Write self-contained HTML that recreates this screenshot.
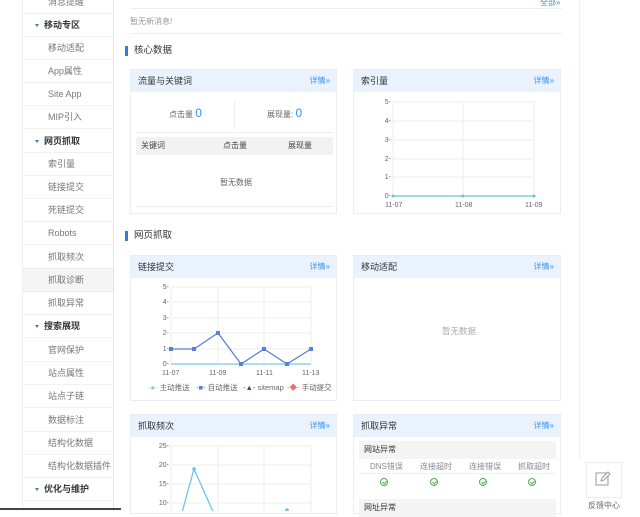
<!DOCTYPE html>
<html><head><meta charset="utf-8"><style>
*{margin:0;padding:0;box-sizing:border-box}
body{width:640px;height:511px;overflow:hidden;background:#fff;position:relative;font-family:"Liberation Sans","Noto Sans CJK SC",sans-serif;font-size:9px;color:#666}
.a{position:absolute}
.side{left:22px;top:0;width:92px;height:511px;border-left:1px solid #eee;border-right:1px solid #e6e6e6}
.it{position:absolute;left:0;width:90px;height:23px;line-height:23px;border-bottom:1px solid #f0f0f0;padding-left:25px;color:#777;font-size:9px}
.gr{padding-left:12px;color:#333;font-weight:bold}
.gr:before{content:"";display:inline-block;width:0;height:0;border-left:2.5px solid transparent;border-right:2.5px solid transparent;border-top:3px solid #3a7bd5;margin-right:5px;vertical-align:middle}
.card{position:absolute;border:1px solid #e8eef5;background:#fff}
.hd{height:22px;background:#eaf3fd;line-height:22px;padding-left:7px;color:#333;font-size:9px}
.hd span{position:absolute;right:6px;color:#3a8ee6;font-size:8px}
.sec{font-size:9.5px;color:#333;padding-left:6px;border-left:3px solid #2d7ee0;line-height:10px}
.ok{display:inline-block;width:8px;height:8px;border:1px solid #4cae4c;border-radius:50%;position:relative}
.ok:after{content:"";position:absolute;left:2px;top:1px;width:2px;height:3px;border-right:1px solid #4cae4c;border-bottom:1px solid #4cae4c;transform:rotate(45deg)}
</style></head><body>
<div class="a side">
<div class="it" style="top:-9px">消息提醒</div>
<div class="it gr" style="top:14px">移动专区</div>
<div class="it" style="top:37px">移动适配</div>
<div class="it" style="top:60px">App属性</div>
<div class="it" style="top:83px">Site App</div>
<div class="it" style="top:106px">MIP引入</div>
<div class="it gr" style="top:130px">网页抓取</div>
<div class="it" style="top:153px">索引量</div>
<div class="it" style="top:176px">链接提交</div>
<div class="it" style="top:199px">死链提交</div>
<div class="it" style="top:222px">Robots</div>
<div class="it" style="top:246px">抓取频次</div>
<div class="it" style="top:269px;background:#f5f5f5">抓取诊断</div>
<div class="it" style="top:292px">抓取异常</div>
<div class="it gr" style="top:315px">搜索展现</div>
<div class="it" style="top:339px">官网保护</div>
<div class="it" style="top:362px">站点属性</div>
<div class="it" style="top:385px">站点子链</div>
<div class="it" style="top:409px">数据标注</div>
<div class="it" style="top:432px">结构化数据</div>
<div class="it" style="top:455px">结构化数据插件</div>
<div class="it gr" style="top:478px">优化与维护</div>
</div>
<div class="a" style="left:0;top:508px;width:121px;height:2px;background:#444"></div>
<div class="a" style="left:579px;top:0;width:1px;height:460px;background:#f0f0f0"></div>
<div class="a" style="left:130px;top:8px;width:432px;height:1px;background:#eee"></div>
<div class="a" style="left:540px;top:-3px;color:#3a8ee6;font-size:8px">全部»</div>
<div class="a" style="left:130px;top:16px;font-size:8px;color:#999">暂无新消息!</div>
<div class="a" style="left:130px;top:33px;width:432px;height:1px;background:#eee"></div>
<div class="a sec" style="left:125px;top:46px">核心数据</div>
<div class="a sec" style="left:125px;top:231px">网页抓取</div>

<div class="card" style="left:130px;top:69px;width:207px;height:145px">
<div class="hd">流量与关键词<span>详情»</span></div>
<div class="a" style="left:103px;top:30px;width:1px;height:30px;background:#eee"></div>
<div class="a" style="left:38px;top:36px;font-size:8px">点击量 <b style="color:#3a8ee6;font-size:12px;font-weight:normal">0</b></div>
<div class="a" style="left:136px;top:36px;font-size:8px">展现量: <b style="color:#3a8ee6;font-size:12px;font-weight:normal">0</b></div>
<div class="a" style="left:5px;top:62px;width:197px;height:1px;background:#eee"></div>
<div class="a" style="left:5px;top:67px;width:197px;height:18px;background:#f2f2f2;font-size:8px;color:#444;line-height:18px"><span class="a" style="left:5px">关键词</span><span class="a" style="left:87px">点击量</span><span class="a" style="left:152px">展现量</span></div>
<div class="a" style="left:89px;top:107px;font-size:8px">暂无数据</div>
<div class="a" style="left:5px;top:136px;width:197px;height:1px;background:#eee"></div>
</div>

<div class="card" style="left:353px;top:69px;width:208px;height:145px">
<div class="hd">索引量<span>详情»</span></div>
</div>
<svg class="a" style="left:353px;top:90px" width="208" height="124" font-size="7" fill="#666" font-family="Liberation Sans">
<g stroke="#eee"><line x1="40" y1="12" x2="181" y2="12"/><line x1="40" y1="31" x2="181" y2="31"/><line x1="40" y1="50" x2="181" y2="50"/><line x1="40" y1="69" x2="181" y2="69"/><line x1="40" y1="87" x2="181" y2="87"/><line x1="110" y1="12" x2="110" y2="106"/><line x1="181" y1="12" x2="181" y2="106"/><line x1="40" y1="12" x2="40" y2="106"/></g>
<g text-anchor="end"><text x="38" y="14">5-</text><text x="38" y="33">4-</text><text x="38" y="52">3-</text><text x="38" y="71">2-</text><text x="38" y="89">1-</text><text x="38" y="108">0-</text></g>
<line x1="40" y1="106" x2="181" y2="106" stroke="#6cc3d5" stroke-width="1.3"/>
<circle cx="40" cy="106" r="1.5" fill="#6cc3d5"/><circle cx="110" cy="106" r="1.5" fill="#6cc3d5"/><circle cx="181" cy="106" r="1.5" fill="#6cc3d5"/>
<text x="32" y="117">11-07</text><text x="102" y="117">11-08</text><text x="172" y="117">11-09</text>
</svg>

<div class="card" style="left:130px;top:255px;width:207px;height:146px">
<div class="hd">链接提交<span>详情»</span></div>
</div>
<svg class="a" style="left:130px;top:277px" width="207" height="124" font-size="7" fill="#666" font-family="Liberation Sans">
<g stroke="#eee"><line x1="41" y1="10" x2="181" y2="10"/><line x1="41" y1="25" x2="181" y2="25"/><line x1="41" y1="41" x2="181" y2="41"/><line x1="41" y1="56" x2="181" y2="56"/><line x1="41" y1="72" x2="181" y2="72"/><line x1="41" y1="10" x2="41" y2="87"/><line x1="88" y1="10" x2="88" y2="87"/><line x1="134" y1="10" x2="134" y2="87"/><line x1="181" y1="10" x2="181" y2="87"/></g>
<g text-anchor="end"><text x="39" y="12">5-</text><text x="39" y="27">4-</text><text x="39" y="43">3-</text><text x="39" y="58">2-</text><text x="39" y="74">1-</text><text x="39" y="89">0-</text></g>
<line x1="41" y1="87" x2="181" y2="87" stroke="#7cc6e6" stroke-width="1.3"/>
<polyline points="41,72 64,72 88,56 111,87 134,72 157,87 181,72" fill="none" stroke="#5b7fd8" stroke-width="1.3"/>
<g fill="#5b7fd8"><rect x="39" y="70" width="4" height="4"/><rect x="62" y="70" width="4" height="4"/><rect x="86" y="54" width="4" height="4"/><rect x="109" y="85" width="4" height="4"/><rect x="132" y="70" width="4" height="4"/><rect x="155" y="85" width="4" height="4"/><rect x="179" y="70" width="4" height="4"/></g>
<text x="32" y="98">11-07</text><text x="79" y="98">11-09</text><text x="126" y="98">11-11</text><text x="172" y="98">11-13</text>
<g font-size="7.5"><text x="18" y="113"><tspan fill="#7cc6e6">-●-</tspan> 主动推送</text><text x="66" y="113"><tspan fill="#5b7fd8">-■-</tspan> 自动推送</text><text x="113" y="113"><tspan fill="#2c4e8a">-▲-</tspan> sitemap</text><text x="157" y="113"><tspan fill="#e57373">-◆-</tspan> 手动提交</text></g>
</svg>

<div class="card" style="left:353px;top:255px;width:208px;height:146px">
<div class="hd">移动适配<span>详情»</span></div>
<div class="a" style="left:88px;top:69px;font-size:8.5px;color:#aaa">暂无数据</div>
</div>

<div class="card" style="left:130px;top:414px;width:207px;height:100px">
<div class="hd">抓取频次<span>详情»</span></div>
</div>
<svg class="a" style="left:130px;top:436px" width="207" height="75" font-size="7" fill="#666" font-family="Liberation Sans">
<g stroke="#eee"><line x1="41" y1="10" x2="181" y2="10"/><line x1="41" y1="29" x2="181" y2="29"/><line x1="41" y1="48" x2="181" y2="48"/><line x1="41" y1="67" x2="181" y2="67"/><line x1="41" y1="10" x2="41" y2="75"/><line x1="88" y1="10" x2="88" y2="75"/><line x1="134" y1="10" x2="134" y2="75"/><line x1="181" y1="10" x2="181" y2="75"/></g>
<g text-anchor="end"><text x="39" y="12">25-</text><text x="39" y="31">20-</text><text x="39" y="50">15-</text><text x="39" y="69">10-</text></g>
<polyline points="51,80 64,33 85,80" fill="none" stroke="#6cc3ee" stroke-width="1.3"/>
<circle cx="64" cy="33" r="1.8" fill="#6cc3ee"/><circle cx="157" cy="74" r="1.8" fill="#6cc3ee"/>
</svg>

<div class="card" style="left:353px;top:414px;width:208px;height:100px">
<div class="hd">抓取异常<span>详情»</span></div>
<div class="a" style="left:5px;top:26px;width:197px;height:18px;background:#f4f4f4;color:#333;font-size:8px;line-height:18px;padding-left:5px">网站异常</div>
<div class="a" style="left:5px;top:46px;width:197px;font-size:8px;color:#888"><span class="a" style="left:11px">DNS错误</span><span class="a" style="left:61px">连接超时</span><span class="a" style="left:110px">连接错误</span><span class="a" style="left:159px">抓取超时</span></div>
<div class="a" style="left:5px;top:58px;width:197px;height:1px;background:#eee"></div>
<div class="a" style="left:26px;top:63px"><span class="ok"></span></div>
<div class="a" style="left:76px;top:63px"><span class="ok"></span></div>
<div class="a" style="left:125px;top:63px"><span class="ok"></span></div>
<div class="a" style="left:174px;top:63px"><span class="ok"></span></div>
<div class="a" style="left:5px;top:84px;width:197px;height:18px;background:#f4f4f4;color:#333;font-size:8px;line-height:18px;padding-left:5px">网址异常</div>
</div>

<div class="a" style="left:586px;top:462px;width:36px;height:36px;border:1px solid #eee;background:#fff"></div>
<svg class="a" style="left:594px;top:470px" width="18" height="18"><rect x="2" y="3" width="12" height="12" fill="none" stroke="#999" stroke-width="1"/><path d="M7 11 L8 8 L14 2 L16 4 L10 10 Z" fill="#fff" stroke="#999" stroke-width="1"/></svg>
<div class="a" style="left:588px;top:500px;font-size:8px;color:#666">反馈中心</div>
</body></html>
